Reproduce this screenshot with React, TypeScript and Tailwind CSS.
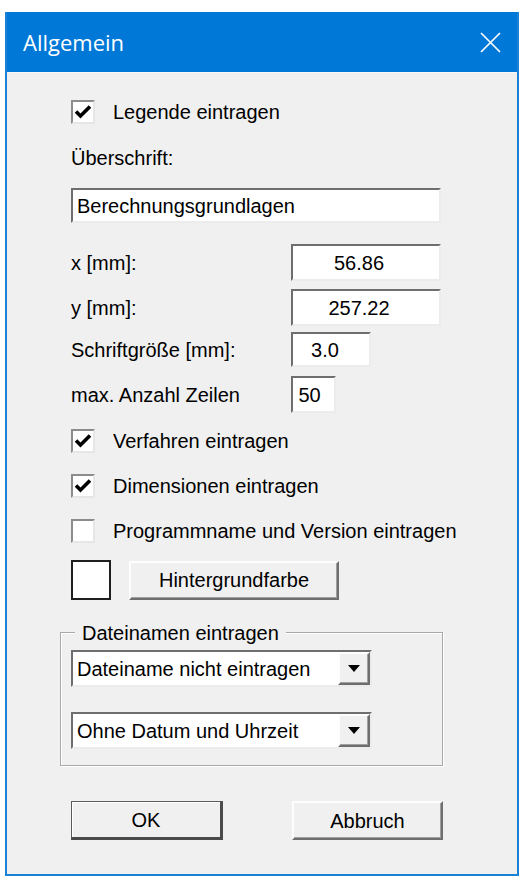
import React from "react";

const font = { fontFamily: '"Liberation Sans", Arial, sans-serif' };

const Check: React.FC<{ checked?: boolean; label: string }> = ({ checked, label }) => (
  <div className="flex items-center h-[24px]">
    <div className="w-[24px] h-[24px] bg-white border-2 border-t-[#8c8c8c] border-l-[#8c8c8c] border-b-[#e6e6e6] border-r-[#e6e6e6] flex items-center justify-center">
      {checked && (
        <svg width="18" height="18" viewBox="0 0 18 18">
          <polyline points="2,8.5 6.5,13 16,3.5" fill="none" stroke="#000" strokeWidth="3.6" />
        </svg>
      )}
    </div>
    <span className="ml-[18px] text-[20px] leading-none text-black">{label}</span>
  </div>
);

const sunken =
  "bg-white border-2 border-t-[#6e6e6e] border-l-[#6e6e6e] border-b-[#ececec] border-r-[#ececec]";

const raised =
  "bg-[#f0f0f0] border-2 border-t-[#fdfdfd] border-l-[#fdfdfd] border-b-[#6e6e6e] border-r-[#6e6e6e] shadow-[inset_-1px_-1px_0_#a0a0a0]";

const NumRow: React.FC<{ label: string; value: string; box: string }> = ({ label, value, box }) => (
  <div className="flex items-center">
    <span className="w-[220px] text-[20px] leading-none text-black">{label}</span>
    <div className={`${sunken} ${box} flex items-center justify-center text-[20px] leading-none text-black`}>
      {value}
    </div>
  </div>
);

const Combo: React.FC<{ value: string }> = ({ value }) => (
  <div className={`${sunken} w-[301px] h-[37px] flex items-stretch`}>
    <span className="flex-1 flex items-center pl-[4px] text-[20px] leading-none text-black">{value}</span>
    <div className={`${raised} w-[32px] flex items-center justify-center`}>
      <svg width="12" height="7" viewBox="0 0 12 7">
        <polygon points="0,0 12,0 6,7" fill="#000" />
      </svg>
    </div>
  </div>
);

export default function App() {
  return (
    <div className="min-h-screen bg-white pt-[12px] pl-[5px]" style={font}>
      <div className="w-[514px] border-x-2 border-b-2 border-[#1a82d6]">
        {/* Title bar */}
        <div className="h-[60px] bg-[#0078d7] flex items-center justify-between pl-[16px] pr-[16px]">
          <span
            className="text-white text-[22px] leading-none"
            style={{ fontFamily: '"Segoe UI", "Open Sans", "Noto Sans", sans-serif' }}
          >
            Allgemein
          </span>
          <svg width="21" height="21" viewBox="0 0 21 21">
            <path d="M1 1 L20 20 M20 1 L1 20" stroke="#fff" strokeWidth="1.7" />
          </svg>
        </div>

        {/* Body */}
        <div className="bg-[#f0f0f0] border-t border-[#f8f8f8] pt-[27px] pb-[34px] pl-[53px] flex flex-col">
          <div className="pl-[11px] flex flex-col">
            <Check checked label="Legende eintragen" />
            <div className="mt-[22px] h-[24px] flex items-center text-[20px] leading-none text-black">Überschrift:</div>
            <div className={`${sunken} mt-[18px] w-[370px] h-[35px] flex items-center pl-[4px] text-[20px] leading-none text-black`}>
              Berechnungsgrundlagen
            </div>
            <div className="mt-[21px]">
              <NumRow label="x [mm]:" value="56.86" box="w-[150px] h-[37px] pr-[14px]" />
            </div>
            <div className="mt-[8px]">
              <NumRow label="y [mm]:" value="257.22" box="w-[150px] h-[37px] pr-[14px]" />
            </div>
            <div className="mt-[6px]">
              <NumRow label="Schriftgröße [mm]:" value="3.0" box="w-[80px] h-[35px] pr-[12px]" />
            </div>
            <div className="mt-[9px]">
              <NumRow label="max. Anzahl Zeilen" value="50" box="w-[45px] h-[37px] pr-[8px]" />
            </div>
            <div className="mt-[16px]">
              <Check checked label="Verfahren eintragen" />
            </div>
            <div className="mt-[21px]">
              <Check checked label="Dimensionen eintragen" />
            </div>
            <div className="mt-[21px]">
              <Check label="Programmname und Version eintragen" />
            </div>
            <div className="mt-[16px] flex items-center h-[42px]">
              <div className="w-[40px] h-[40px] bg-white border-2 border-[#1e1e1e]" />
              <button className={`${raised} ml-[18px] w-[210px] h-[39px] text-[20px] leading-none text-black`}>
                Hintergrundfarbe
              </button>
            </div>
          </div>

          {/* Group box */}
          <div className="relative mt-[31px] w-[383px] border border-[#a9a9a9] shadow-[inset_1px_1px_0_#fff,1px_1px_0_#fff] pt-[17px] pb-[16px] pl-[10px]">
            <span className="absolute -top-[12px] left-[14px] px-[7px] bg-[#f0f0f0] text-[20px] leading-[24px] text-black">
              Dateinamen eintragen
            </span>
            <Combo value="Dateiname nicht eintragen" />
            <div className="mt-[25px]">
              <Combo value="Ohne Datum und Uhrzeit" />
            </div>
          </div>

          {/* Buttons */}
          <div className="mt-[35px] pl-[11px] flex">
            <button className="w-[152px] h-[39px] bg-[#f0f0f0] border border-[#5a5a5a] border-b-[3px] border-r-[3px] border-b-[#4a4a4a] border-r-[#4a4a4a] shadow-[inset_1px_1px_0_#fff] text-[20px] leading-none text-black">
              OK
            </button>
            <button className={`${raised} ml-[69px] w-[151px] h-[39px] text-[20px] leading-none text-black`}>
              Abbruch
            </button>
          </div>
        </div>
      </div>
    </div>
  );
}
